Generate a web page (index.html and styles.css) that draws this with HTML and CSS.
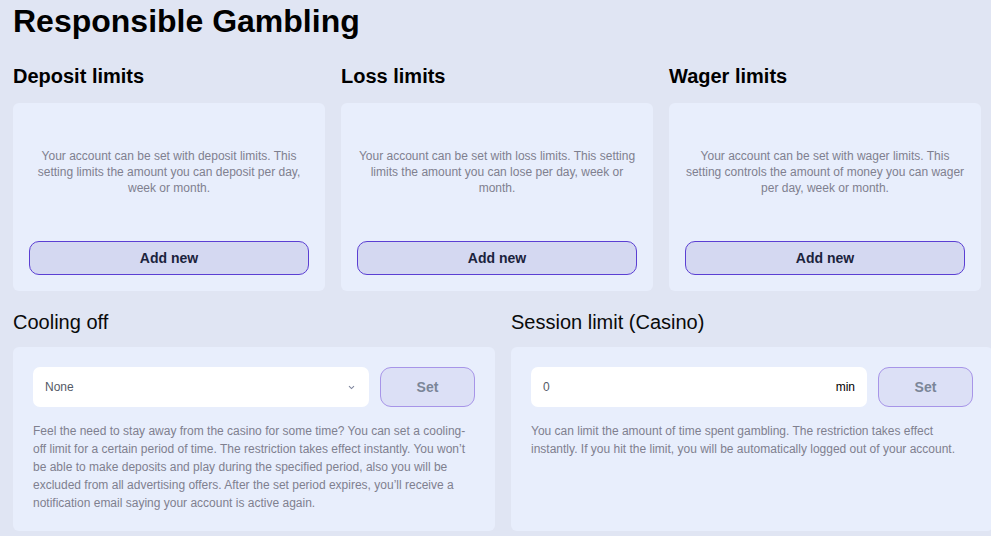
FILE: index.html
```html
<!DOCTYPE html>
<html lang="en">
<head>
<meta charset="utf-8">
<title>Responsible Gambling</title>
<link rel="stylesheet" href="styles.css">
</head>
<body>
<main class="page">
  <h1 class="title">Responsible Gambling</h1>

  <div class="limits">
    <section class="limit">
      <h2 class="limit-title">Deposit limits</h2>
      <div class="card limit-card">
        <p class="limit-text">Your account can be set with deposit limits. This setting limits the amount you can deposit per day, week or month.</p>
        <button class="btn-add" type="button">Add new</button>
      </div>
    </section>
    <section class="limit">
      <h2 class="limit-title">Loss limits</h2>
      <div class="card limit-card">
        <p class="limit-text">Your account can be set with loss limits. This setting limits the amount you can lose per day, week or month.</p>
        <button class="btn-add" type="button">Add new</button>
      </div>
    </section>
    <section class="limit">
      <h2 class="limit-title">Wager limits</h2>
      <div class="card limit-card">
        <p class="limit-text">Your account can be set with wager limits. This setting controls the amount of money you can wager per day, week or month.</p>
        <button class="btn-add" type="button">Add new</button>
      </div>
    </section>
  </div>

  <div class="controls">
    <section class="control">
      <h2 class="control-title">Cooling off</h2>
      <div class="card control-card">
        <div class="control-row">
          <div class="field select">
            <span class="field-value">None</span>
            <svg class="chevron" width="7" height="5" viewBox="0 0 7 5" aria-hidden="true"><path d="M1 1.2 L3.5 3.6 L6 1.2" fill="none" stroke="#7f869e" stroke-width="1.1"/></svg>
          </div>
          <button class="btn-set" type="button">Set</button>
        </div>
        <p class="control-text">Feel the need to stay away from the casino for some time? You can set a cooling-off limit for a certain period of time. The restriction takes effect instantly. You won’t be able to make deposits and play during the specified period, also you will be excluded from all advertising offers. After the set period expires, you’ll receive a notification email saying your account is active again.</p>
      </div>
    </section>
    <section class="control">
      <h2 class="control-title">Session limit (Casino)</h2>
      <div class="card control-card">
        <div class="control-row">
          <div class="field">
            <span class="field-value">0</span>
            <span class="field-unit">min</span>
          </div>
          <button class="btn-set" type="button">Set</button>
        </div>
        <p class="control-text">You can limit the amount of time spent gambling. The restriction takes effect instantly. If you hit the limit, you will be automatically logged out of your account.</p>
      </div>
    </section>
  </div>
</main>
</body>
</html>
```

FILE: styles.css
```css
* { box-sizing: border-box; }

html, body {
  margin: 0;
  padding: 0;
  background: #e0e5f3;
  overflow: hidden;
}

body {
  font-family: "Liberation Sans", Arial, sans-serif;
  color: #000;
}

.page {
  padding: 3px 0 0 13px;
  width: 1010px;
}

.title {
  margin: 0;
  font-size: 32px;
  line-height: 36px;
  font-weight: 700;
}

.limits {
  display: grid;
  grid-template-columns: repeat(3, 312px);
  column-gap: 16px;
  margin-top: 25px;
}

.limit-title {
  margin: 0 0 15px;
  font-size: 20px;
  line-height: 24px;
  font-weight: 700;
}

.card {
  background: #e8eefc;
  border-radius: 6px;
}

.limit-card {
  height: 188px;
  padding: 16px;
  display: flex;
  flex-direction: column;
}

.limit-text {
  flex: 1;
  margin: 0 0 16px;
  display: flex;
  align-items: center;
  justify-content: center;
  text-align: center;
  font-size: 12px;
  line-height: 16px;
  color: #7f808f;
}

.btn-add {
  height: 34px;
  width: 100%;
  border: 1px solid #5b3fd3;
  border-radius: 10px;
  background: #d4d8f1;
  font-family: inherit;
  font-size: 14px;
  font-weight: 700;
  color: #1b233d;
  padding: 0;
}

.controls {
  display: grid;
  grid-template-columns: 482px 482px;
  column-gap: 16px;
  margin-top: 19px;
}

.control-title {
  margin: 0 0 13px;
  font-size: 20px;
  line-height: 24px;
  font-weight: 400;
  color: #0a0a0a;
}

.control-card {
  height: 184px;
  padding: 20px;
}

.control-row {
  display: flex;
  gap: 11px;
}

.field {
  flex: 1;
  height: 40px;
  background: #fff;
  border-radius: 7px;
  display: flex;
  align-items: center;
  justify-content: space-between;
  padding: 0 12px;
  font-size: 12px;
}

.field-value { color: #555a66; }

.field-unit { color: #000; }

.chevron { margin-right: 2px; }

.btn-set {
  width: 95px;
  height: 40px;
  border: 1px solid #a795e8;
  border-radius: 11px;
  background: #dce0f6;
  font-family: inherit;
  font-size: 14px;
  font-weight: 700;
  color: #7b8698;
  padding: 0;
}

.control-text {
  margin: 15px 0 0;
  font-size: 12px;
  line-height: 18px;
  color: #7f808f;
}
```
